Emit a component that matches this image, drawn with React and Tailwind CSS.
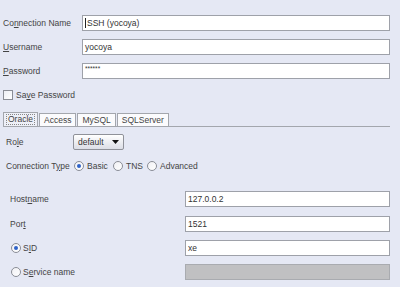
function U({ children }) {
  return <span className="underline underline-offset-1 decoration-[0.5px]">{children}</span>;
}

function Field({ value, className = "", disabled }) {
  return (
    <div
      className={
        "h-[16px] border border-[#9ea1a9] flex items-center pl-[2px] text-[#333] " +
        (disabled ? "bg-[#c0c0c2] border-[#a9abb0] " : "bg-white ") +
        className
      }
    >
      {value}
    </div>
  );
}

function Radio({ checked }) {
  return (
    <div className="w-[10px] h-[10px] rounded-full border border-[#8a8d96] bg-gradient-to-br from-[#f0f0f4] to-white flex items-center justify-center shrink-0">
      {checked && <div className="w-[4px] h-[4px] rounded-full bg-[#2f62c8]" />}
    </div>
  );
}

function Tab({ label, selected }) {
  return (
    <div
      className={
        "border border-[#a3a6ad] border-b-0 px-[2px] flex items-center " +
        (selected ? "h-[14px] bg-[#eef0f8]" : "h-[13px] bg-[#fbfbfd] mt-[1px]")
      }
    >
      <span className={selected ? "border border-dotted border-[#888] px-[1px] leading-[9px]" : "px-[2px]"}>{label}</span>
    </div>
  );
}

export default function App() {
  return (
    <div
      className="w-[400px] h-[287px] overflow-hidden bg-[#e5e8f4] text-[#444] text-[8.5px] leading-none"
      style={{ fontFamily: '"Liberation Sans", Arial, sans-serif' }}
    >
      <div className="pt-[15px] pr-[10px] flex flex-col gap-[8px]">
        <div className="flex items-center">
          <div className="w-[82px] pl-[3px]">Co<U>n</U>nection Name</div>
          <Field className="flex-1" value={<span><span className="border-l border-[#222] mr-[1px]" />SSH (yocoya)</span>} />
        </div>
        <div className="flex items-center">
          <div className="w-[82px] pl-[3px]"><U>U</U>sername</div>
          <Field className="flex-1" value="yocoya" />
        </div>
        <div className="flex items-center">
          <div className="w-[82px] pl-[3px]"><U>P</U>assword</div>
          <Field className="flex-1 !items-start pt-[2px] text-[6.5px]" value="******" />
        </div>
      </div>

      <div className="mt-[11px] pl-[3px] flex items-center gap-[3px] h-[10px]">
        <div className="w-[10px] h-[10px] border border-[#8a8d96] bg-gradient-to-br from-[#eceef4] to-white" />
        <span>Sa<U>v</U>e Password</span>
      </div>

      <div className="mt-[12px] ml-[3px] mr-[10px] flex items-end gap-[1px] border-b border-[#a3a6ad] h-[15px]">
        <Tab label="Oracle" selected />
        <Tab label="Access" />
        <Tab label="MySQL" />
        <Tab label="SQLServer" />
      </div>

      <div className="mt-[7px] flex items-center h-[16px]">
        <div className="w-[73px] pl-[6px]">Ro<U>l</U>e</div>
        <div className="w-[51px] h-[16px] border border-[#8f9199] rounded-[2px] bg-gradient-to-b from-white to-[#dcdee6] flex items-center pl-[4px] text-[#333]">
          <span className="flex-1">default</span>
          <svg width="7" height="4" viewBox="0 0 7 4" className="mr-[4px]">
            <path d="M0 0h7L3.5 4z" fill="#111" />
          </svg>
        </div>
      </div>

      <div className="mt-[11px] flex items-center h-[10px]">
        <div className="w-[74px] pl-[6px]">Connection T<U>y</U>pe</div>
        <Radio checked />
        <span className="ml-[3px] w-[26px]">Basic</span>
        <Radio />
        <span className="ml-[3px] w-[21px]">TNS</span>
        <Radio />
        <span className="ml-[3px]">Advanced</span>
      </div>

      <div className="mt-[20px] pr-[10px] flex flex-col">
        <div className="flex items-center">
          <div className="w-[185px] pl-[10px]">Host<U>n</U>ame</div>
          <Field className="flex-1" value="127.0.0.2" />
        </div>
        <div className="flex items-center mt-[9px]">
          <div className="w-[185px] pl-[10px]">Por<U>t</U></div>
          <Field className="flex-1" value="1521" />
        </div>
        <div className="flex items-center mt-[8px]">
          <div className="w-[185px] pl-[11px] flex items-center gap-[2px]">
            <Radio checked />
            <span>S<U>I</U>D</span>
          </div>
          <Field className="flex-1" value="xe" />
        </div>
        <div className="flex items-center mt-[8px]">
          <div className="w-[185px] pl-[11px] flex items-center gap-[2px]">
            <Radio />
            <span>S<U>e</U>rvice name</span>
          </div>
          <Field className="flex-1" disabled />
        </div>
      </div>
    </div>
  );
}
